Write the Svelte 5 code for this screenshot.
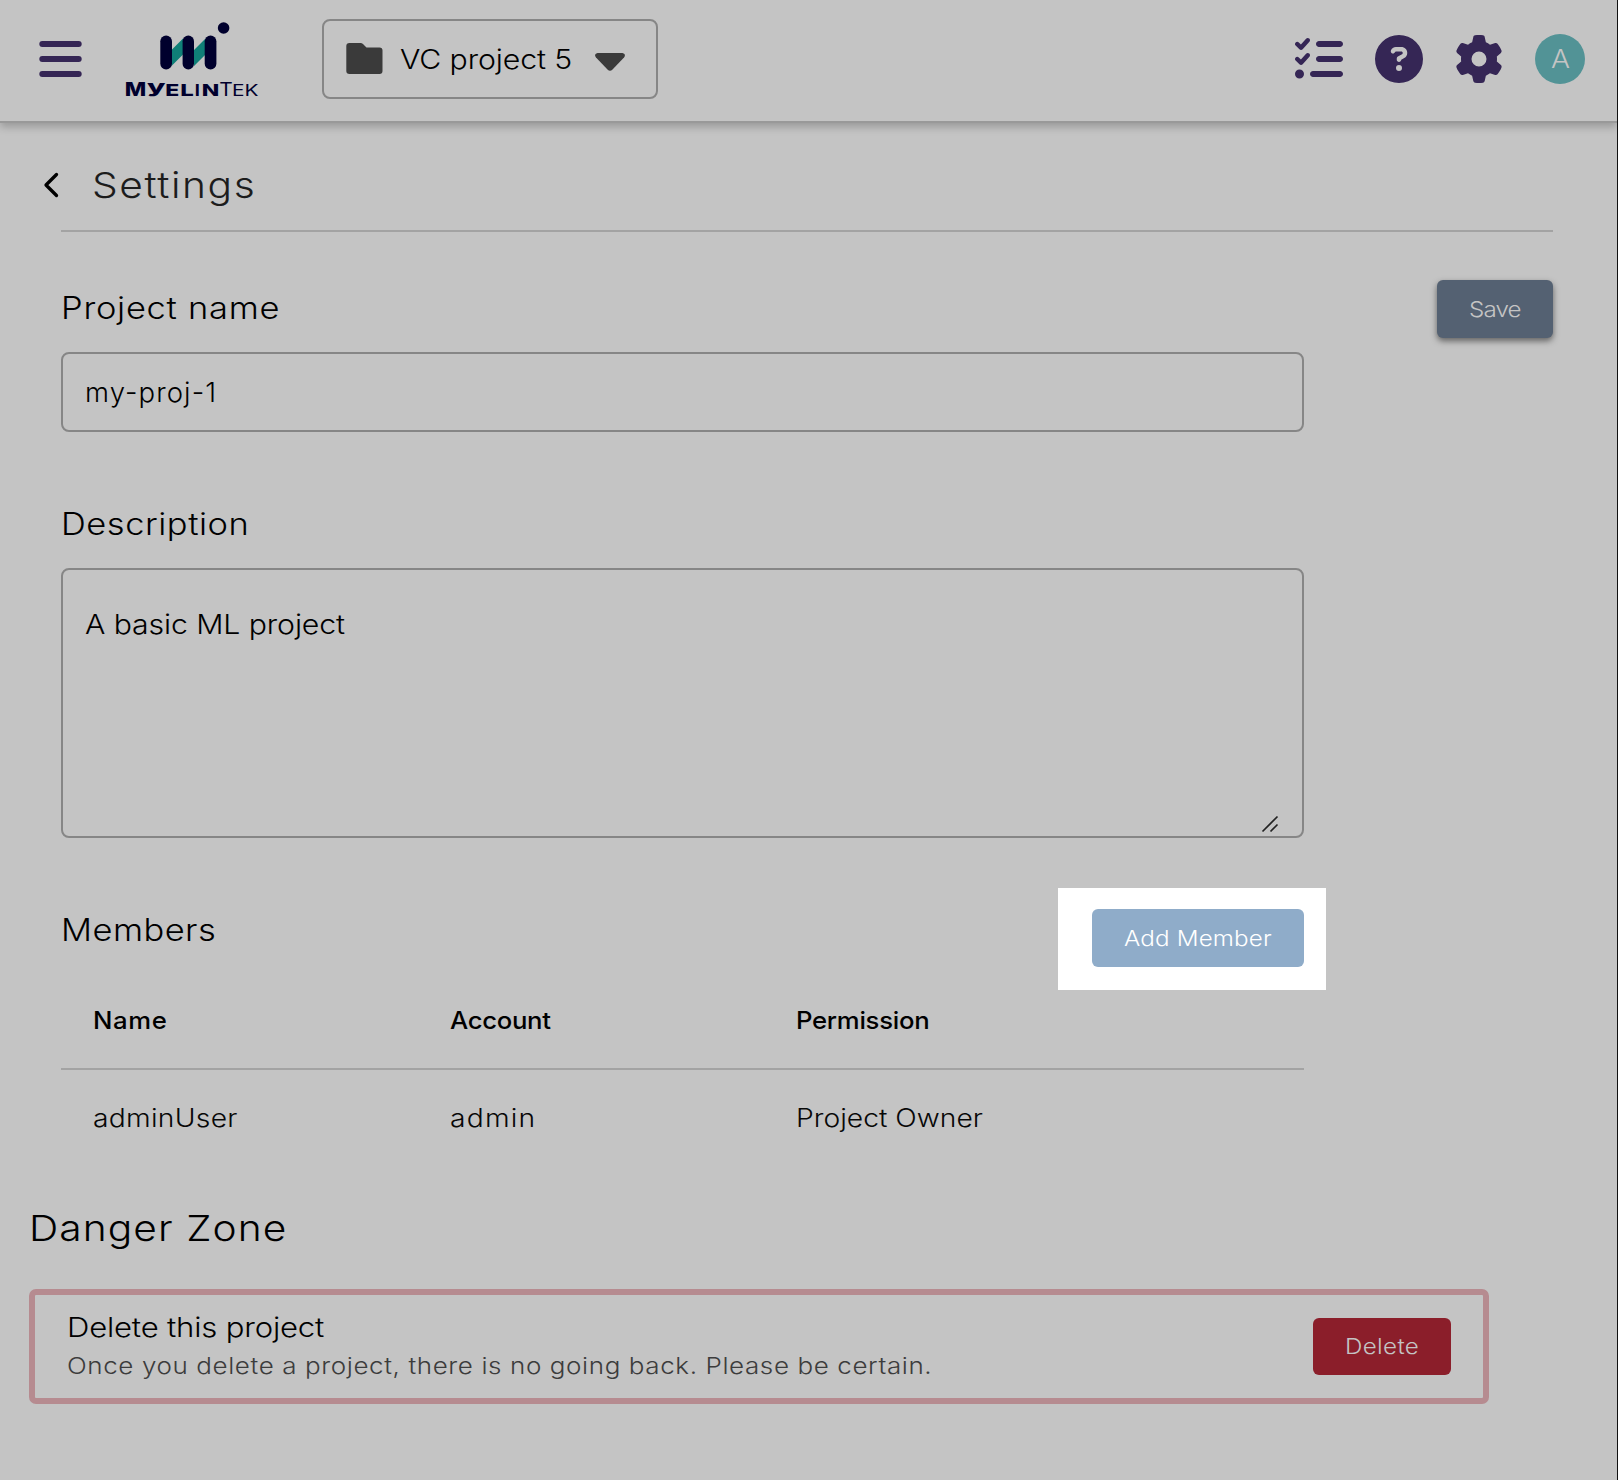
<script>
  const members = [{ name: 'adminUser', account: 'admin', permission: 'Project Owner' }];
  let projectName = $state('my-proj-1');
</script>

<div class="page">
  <header>
    <svg class="burger" viewBox="0 0 44 36" aria-label="Menu">
      <rect x="1.300" y="0" width="42.400" height="6" rx="3" />
      <rect x="1.300" y="15" width="42.400" height="6" rx="3" />
      <rect x="1.300" y="30" width="42.400" height="6" rx="3" />
    </svg>

    <svg class="logo" viewBox="0 1.5 136 78" aria-label="MyelinTek">
      <path class="teal" d="M49.500 31.500 61 20V36L49.500 47.500ZM72 31.500 83.500 20V36L72 47.500Z" />
      <rect x="38.300" y="17" width="11.700" height="34" rx="5.850" />
      <rect x="60.600" y="17" width="11.400" height="34" rx="5.700" />
      <rect x="82.700" y="17" width="11.700" height="34" rx="5.850" />
      <circle cx="101.600" cy="9.500" r="5.800" />
      <text class="heavy" x="2.700" y="77" font-size="19.300" textLength="21.500" lengthAdjust="spacingAndGlyphs">M</text>
      <text class="heavy" x="25" y="74.200" font-size="17" textLength="18.500" lengthAdjust="spacingAndGlyphs">y</text>
      <text class="heavy" x="43.300" y="77" font-size="16" textLength="14" lengthAdjust="spacingAndGlyphs">E</text>
      <text class="heavy" x="58.300" y="77" font-size="16" textLength="13.500" lengthAdjust="spacingAndGlyphs">L</text>
      <text class="heavy" x="73" y="77" font-size="16">I</text>
      <text class="heavy" x="79.800" y="77" font-size="16" textLength="17.500" lengthAdjust="spacingAndGlyphs">N</text>
      <text class="thin" x="97.300" y="77" font-size="19.300" textLength="13.500" lengthAdjust="spacingAndGlyphs">T</text>
      <text class="thin" x="110" y="77" font-size="16" textLength="26.500" lengthAdjust="spacingAndGlyphs">EK</text>
    </svg>

    <div class="picker">
      <svg class="folder" viewBox="0 0 37 32"><path d="M3.500 0H14.500Q16 0 17 1L20.500 4.500H33.500Q36.500 4.500 36.500 7.500V28Q36.500 31 33.500 31H3.500Q.3 31 .3 28V3Q.3 0 3.500 0Z" /></svg>
      <span class="txt picked">VC project 5</span>
      <svg class="caret" viewBox="0 0 30 18"><path d="M2.500 0H27.500Q31.500 1 29 4.500L17.500 16.500Q15 19 12.500 16.500L1 4.500Q-1.500 1 2.500 0Z" /></svg>
    </div>

    <nav>
      <svg viewBox="0 0 512 512"><path d="M152.100 38.200c9.900 8.900 10.700 24 1.800 33.900l-72 80c-4.400 4.900-10.600 7.800-17.200 7.900s-12.900-2.400-17.600-7L7 113C-2.300 103.600-2.300 88.400 7 79s24.600-9.400 33.900 0l22.100 22.100 55.100-61.200c8.900-9.900 24-10.700 33.900-1.800zm0 160c9.900 8.900 10.700 24 1.800 33.900l-72 80c-4.400 4.900-10.600 7.800-17.200 7.900s-12.900-2.400-17.600-7L7 273c-9.400-9.400-9.400-24.600 0-33.900s24.600-9.400 33.900 0l22.100 22.100 55.100-61.200c8.900-9.900 24-10.700 33.900-1.800zM224 96c0-17.700 14.300-32 32-32H480c17.700 0 32 14.300 32 32s-14.300 32-32 32H256c-17.700 0-32-14.300-32-32zm0 160c0-17.700 14.300-32 32-32H480c17.700 0 32 14.300 32 32s-14.300 32-32 32H256c-17.700 0-32-14.300-32-32zM160 416c0-17.700 14.300-32 32-32H480c17.700 0 32 14.300 32 32s-14.300 32-32 32H192c-17.700 0-32-14.300-32-32zM48 368a48 48 0 1 1 0 96 48 48 0 1 1 0-96z" /></svg>
      <svg viewBox="0 0 512 512"><path d="M256 512A256 256 0 1 0 256 0a256 256 0 1 0 0 512zM169.800 165.300c7.900-22.300 29.100-37.300 52.800-37.300h58.300c34.900 0 63.100 28.300 63.100 63.100c0 22.600-12.100 43.500-31.700 54.800L280 264.400c-.2 13-10.900 23.600-24 23.600c-13.300 0-24-10.700-24-24V250.500c0-8.600 4.600-16.500 12.100-20.800l44.300-25.400c4.700-2.700 7.600-7.700 7.600-13.100c0-8.400-6.800-15.100-15.100-15.100H222.600c-3.400 0-6.400 2.100-7.500 5.300l-.4 1.200c-4.400 12.500-18.200 19-30.600 14.600s-19-18.200-14.600-30.600l.4-1.200zM224 352a32 32 0 1 1 64 0 32 32 0 1 1 -64 0z" /></svg>
      <svg viewBox="0 0 512 512"><path d="M495.900 166.600c3.200 8.700 .5 18.400-6.400 24.600l-43.300 39.400c1.100 8.300 1.700 16.800 1.700 25.400s-.6 17.100-1.700 25.400l43.300 39.400c6.900 6.200 9.600 15.900 6.400 24.600c-4.400 11.900-9.700 23.300-15.800 34.300l-4.700 8.100c-6.600 11-14 21.400-22.100 31.200c-5.900 7.200-15.700 9.600-24.500 6.800l-55.700-17.700c-13.400 10.300-28.200 18.900-44 25.400l-12.500 57.100c-2 9.100-9 16.300-18.200 17.800c-13.800 2.300-28 3.500-42.500 3.500s-28.700-1.200-42.500-3.500c-9.200-1.500-16.200-8.700-18.200-17.800l-12.500-57.100c-15.800-6.500-30.600-15.100-44-25.400L83.100 425.900c-8.800 2.800-18.600 .3-24.500-6.800c-8.100-9.800-15.500-20.200-22.100-31.200l-4.700-8.100c-6.100-11-11.400-22.400-15.800-34.300c-3.200-8.700-.5-18.400 6.400-24.600l43.300-39.400C64.600 273.100 64 264.600 64 256s.6-17.100 1.700-25.400L22.400 191.200c-6.900-6.200-9.600-15.900-6.400-24.600c4.400-11.900 9.700-23.300 15.800-34.300l4.700-8.100c6.600-11 14-21.400 22.100-31.200c5.900-7.200 15.700-9.600 24.500-6.800l55.700 17.700c13.400-10.300 28.200-18.900 44-25.400l12.500-57.100c2-9.100 9-16.300 18.200-17.800C227.300 1.200 241.500 0 256 0s28.700 1.200 42.500 3.500c9.200 1.500 16.200 8.700 18.200 17.800l12.500 57.100c15.800 6.500 30.600 15.100 44 25.400l55.700-17.700c8.800-2.800 18.600-.3 24.500 6.800c8.100 9.800 15.500 20.200 22.100 31.200l4.700 8.100c6.100 11 11.400 22.400 15.800 34.300zM256 336a80 80 0 1 0 0-160 80 80 0 1 0 0 160z" /></svg>
      <div class="avatar"><span class="txt letter">A</span></div>
    </nav>
  </header>

  <div class="title">
    <svg class="back" viewBox="0 0 16 26"><path d="M13.500 2.500 3 13 13.500 23.500" /></svg>
    <h1 class="txt">Settings</h1>
  </div>

  <main>
    <div class="fields">
      <label class="txt label project" for="pname">Project name</label>
      <input id="pname" bind:value={projectName} />

      <div class="txt label about">Description</div>
      <div class="area">
        <span class="txt">A basic ML project</span>
        <svg class="grip" viewBox="0 0 16 16"><path d="M.5 15.500 15.500.5M8.500 15.500 15.500 8.500" /></svg>
      </div>

      <div class="members">
        <div class="txt label people">Members</div>
        <div class="spotlight">
          <button class="add"><span class="txt">Add Member</span></button>
        </div>
      </div>

      <div class="row head">
        <span class="txt c1">Name</span>
        <span class="txt c2">Account</span>
        <span class="txt c3">Permission</span>
      </div>
      {#each members as m}
        <div class="row">
          <span class="txt c1">{m.name}</span>
          <span class="txt c2">{m.account}</span>
          <span class="txt c3">{m.permission}</span>
        </div>
      {/each}
    </div>
    <button class="save"><span class="txt">Save</span></button>
  </main>

  <section class="danger">
    <h2 class="txt">Danger Zone</h2>
    <div class="box">
      <div class="copy">
        <div class="txt what">Delete this project</div>
        <div class="txt warn">Once you delete a project, there is no going back. Please be certain.</div>
      </div>
      <button class="delete"><span class="txt">Delete</span></button>
    </div>
  </section>
</div>

<style>
  :global(body) {
    margin: 0;
    background: #c4c4c4;
  }
  .page {
    box-sizing: border-box;
    height: 1480px;
    overflow: hidden;
    border-right: 1px solid #111;
    background: #c4c4c4;
    color: #000;
    font-family: Inter, "Open Sans", sans-serif;
    font-weight: 300;
  }
  svg {
    display: block;
    flex: none;
    overflow: visible;
  }
  /* Slightly extended letterforms across the interface */
  .txt {
    display: block;
    width: max-content;
    white-space: nowrap;
    transform: scaleX(1.13);
    transform-origin: 0 50%;
  }
  h1,
  h2 {
    margin: 0;
    font-weight: 300;
  }

  header {
    box-sizing: border-box;
    display: flex;
    align-items: center;
    height: 123px;
    padding: 0 32px 4px 38px;
    border-bottom: 2px solid #999;
    box-shadow: 0 4px 8px rgba(0, 0, 0, 0.22);
  }
  .burger {
    width: 44px;
    height: 36px;
    fill: #352655;
  }
  .logo {
    width: 136px;
    height: 78px;
    margin: 0 64px 0 40px;
    fill: #00002d;
  }
  .teal {
    fill: #0f7f77;
  }
  .heavy {
    font-weight: 800;
  }
  .thin {
    font-weight: 400;
  }
  .picker {
    box-sizing: border-box;
    display: flex;
    align-items: center;
    width: 336px;
    height: 80px;
    padding-left: 22px;
    border: 2px solid #868686;
    border-radius: 8px;
  }
  .folder {
    width: 37px;
    height: 32px;
    fill: #3a3a3a;
  }
  .picker .picked {
    width: 157px;
    margin-left: 17px;
    font-size: 27.5px;
    line-height: 40px;
    letter-spacing: -0.1px;
    transform: scaleX(1.1);
  }
  .caret {
    width: 30px;
    height: 18px;
    margin: 6px 0 0 38px;
    fill: #3a3a3a;
  }
  nav {
    display: flex;
    align-items: center;
    gap: 32px;
    margin-left: auto;
  }
  nav svg {
    width: 48px;
    height: 48px;
    fill: #352655;
  }
  .avatar {
    display: flex;
    align-items: center;
    justify-content: center;
    width: 50px;
    height: 50px;
    border-radius: 50%;
    background: #529396;
    color: #c4c4c4;
  }
  .letter {
    font-size: 25px;
    transform-origin: 50% 50%;
  }

  .title {
    box-sizing: border-box;
    display: flex;
    align-items: center;
    height: 109px;
    margin: 0 64px 0 61px;
    padding-top: 16px;
    border-bottom: 2px solid #a3a3a3;
  }
  .back {
    width: 16px;
    height: 26px;
    margin-left: -18px;
    fill: none;
    stroke: #000;
    stroke-width: 3.3;
    stroke-linecap: round;
    stroke-linejoin: round;
  }
  h1 {
    margin-left: 33px;
    color: #1c1c1c;
    font-size: 36px;
    line-height: 50px;
    letter-spacing: 1.4px;
  }

  main {
    display: flex;
    align-items: flex-start;
    justify-content: space-between;
    padding: 0 64px 0 61px;
  }
  .fields {
    width: 1243px;
    padding-top: 56px;
  }
  .label {
    font-size: 30.5px;
    line-height: 40px;
  }
  .project {
    letter-spacing: 0.65px;
  }
  .about {
    margin-top: 72px;
    letter-spacing: 0.48px;
  }
  .people {
    margin-top: 22px;
    letter-spacing: 0.4px;
  }
  input,
  .area {
    box-sizing: border-box;
    display: block;
    width: 100%;
    margin: 24px 0 0;
    border: 2px solid #868686;
    border-radius: 8px;
    background: none;
    color: #000;
    font: 300 27.5px Inter, sans-serif;
  }
  input {
    height: 80px;
    padding: 0 0 1px 22px;
    letter-spacing: 1.1px;
    outline: none;
  }
  .area {
    display: flex;
    justify-content: space-between;
    height: 270px;
    padding: 34px 24px 4px 22px;
    line-height: 40px;
  }
  .area .txt {
    letter-spacing: -0.1px;
    transform: scaleX(1.1);
  }
  .grip {
    align-self: flex-end;
    width: 16px;
    height: 16px;
    fill: none;
    stroke: #222;
    stroke-width: 1.7;
  }
  .members {
    display: flex;
    justify-content: space-between;
    height: 102px;
    margin-top: 50px;
  }
  .spotlight {
    box-sizing: border-box;
    width: 268px;
    margin-right: -22px;
    padding: 21px 22px 0 34px;
    background: #fff;
  }
  button {
    display: block;
    border: 0;
    border-radius: 6px;
    text-align: left;
    color: #c4c4c4;
    font: 300 22px Inter, sans-serif;
  }
  button .txt {
    transform: scaleX(1.1);
  }
  .add {
    width: 212px;
    height: 58px;
    padding: 0 0 0 32px;
    background: #8facc9;
    color: #fff;
    letter-spacing: 0.13px;
  }
  .save {
    width: 116px;
    height: 58px;
    margin-top: 48px;
    padding: 0 0 0 32px;
    background: #546172;
    box-shadow: 0 3px 6px rgba(0, 0, 0, 0.5);
    letter-spacing: -0.8px;
  }
  .delete {
    width: 138px;
    height: 57px;
    margin: 23px 32px 0 0;
    padding: 0 0 2px 32px;
    background: #8b1e2a;
    letter-spacing: 0.3px;
  }
  .row {
    box-sizing: border-box;
    display: grid;
    grid-template-columns: 357px 346px 1fr;
    align-items: center;
    height: 96px;
    padding-left: 32px;
    color: #080808;
    font-size: 25px;
  }
  .head {
    height: 80px;
    padding-bottom: 17px;
    border-bottom: 2px solid #a3a3a3;
    color: #000;
    font-size: 24px;
    font-weight: 500;
  }
  .head .txt {
    transform: scaleX(1.07);
  }
  .c1 {
    letter-spacing: 0.24px;
  }
  .c2 {
    letter-spacing: 1.05px;
  }
  .c3 {
    letter-spacing: 0;
  }
  .head .c1 {
    letter-spacing: 0.6px;
  }
  .head .c2 {
    letter-spacing: -0.3px;
  }
  .head .c3 {
    letter-spacing: -0.25px;
  }

  .danger {
    padding: 37px 128px 0 29px;
  }
  h2 {
    font-size: 36px;
    line-height: 50px;
    letter-spacing: 0.95px;
  }
  .box {
    box-sizing: border-box;
    display: flex;
    justify-content: space-between;
    height: 115px;
    margin-top: 36px;
    padding-left: 32px;
    border: 6px solid #b68b90;
    border-radius: 7px;
  }
  .copy {
    padding-top: 12px;
    line-height: 40px;
  }
  .what {
    font-size: 27.5px;
    letter-spacing: -0.17px;
  }
  .warn {
    margin-top: -1px;
    color: #3c3c3c;
    font-size: 23px;
    letter-spacing: 0.53px;
  }
</style>
